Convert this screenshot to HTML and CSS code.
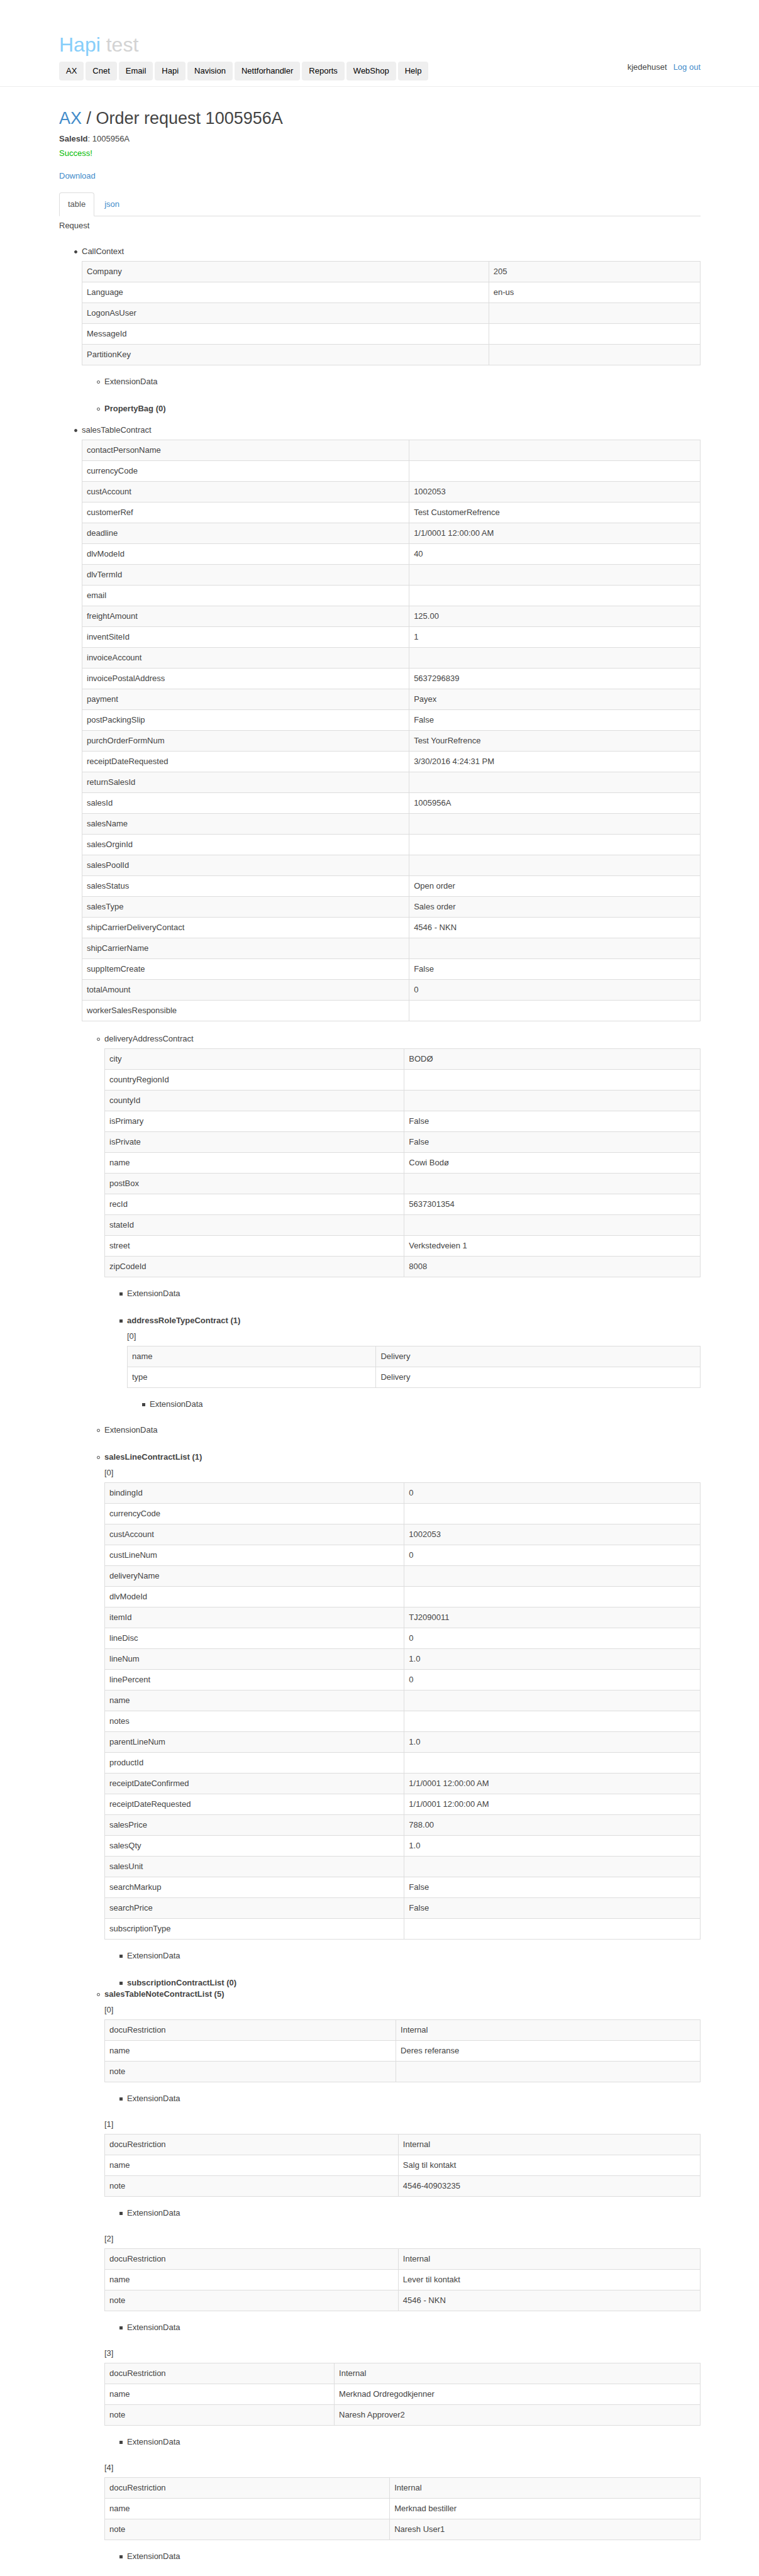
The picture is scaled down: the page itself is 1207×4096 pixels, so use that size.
FILE: index.html
```html
<!DOCTYPE html>
<html lang="en">
<head>
<meta charset="utf-8">
<meta name="viewport" content="width=device-width, initial-scale=1">
<title>Order request 1005956A</title>
<link rel="stylesheet" href="styles.css">
</head>
<body>
<header class="site-header">
  <div class="logo"><span class="logo-name">Hapi</span> test</div>
  <div class="header-row">
    <nav class="main-nav">
      <a href="#">AX</a>
      <a href="#">Cnet</a>
      <a href="#">Email</a>
      <a href="#">Hapi</a>
      <a href="#">Navision</a>
      <a href="#">Nettforhandler</a>
      <a href="#">Reports</a>
      <a href="#">WebShop</a>
      <a href="#">Help</a>
    </nav>
    <div class="user"><span>kjedehuset</span><a href="#">Log out</a></div>
  </div>
</header>
<main class="content">
  <h1><a href="#">AX</a> / Order request 1005956A</h1>
  <p class="sales-id"><b>SalesId</b>: 1005956A</p>
  <p class="success">Success!</p>
  <p class="download"><a href="#">Download</a></p>
  <nav class="tabs">
    <a class="tab active" href="#">table</a>
    <a class="tab" href="#">json</a>
  </nav>
  <p class="request">Request</p>
  <ul class="tree">
    <li class="branch">CallContext
      <table class="data data-context">
        <tr><td>Company</td><td>205</td></tr>
        <tr><td>Language</td><td>en-us</td></tr>
        <tr><td>LogonAsUser</td><td></td></tr>
        <tr><td>MessageId</td><td></td></tr>
        <tr><td>PartitionKey</td><td></td></tr>
      </table>
      <ul>
        <li class="leaf">ExtensionData</li>
        <li><b>PropertyBag (0)</b></li>
      </ul>
    </li>
    <li>salesTableContract
      <table class="data data-main">
        <tr><td>contactPersonName</td><td></td></tr>
        <tr><td>currencyCode</td><td></td></tr>
        <tr><td>custAccount</td><td>1002053</td></tr>
        <tr><td>customerRef</td><td>Test CustomerRefrence</td></tr>
        <tr><td>deadline</td><td>1/1/0001 12:00:00 AM</td></tr>
        <tr><td>dlvModeId</td><td>40</td></tr>
        <tr><td>dlvTermId</td><td></td></tr>
        <tr><td>email</td><td></td></tr>
        <tr><td>freightAmount</td><td>125.00</td></tr>
        <tr><td>inventSiteId</td><td>1</td></tr>
        <tr><td>invoiceAccount</td><td></td></tr>
        <tr><td>invoicePostalAddress</td><td>5637296839</td></tr>
        <tr><td>payment</td><td>Payex</td></tr>
        <tr><td>postPackingSlip</td><td>False</td></tr>
        <tr><td>purchOrderFormNum</td><td>Test YourRefrence</td></tr>
        <tr><td>receiptDateRequested</td><td>3/30/2016 4:24:31 PM</td></tr>
        <tr><td>returnSalesId</td><td></td></tr>
        <tr><td>salesId</td><td>1005956A</td></tr>
        <tr><td>salesName</td><td></td></tr>
        <tr><td>salesOrginId</td><td></td></tr>
        <tr><td>salesPoolId</td><td></td></tr>
        <tr><td>salesStatus</td><td>Open order</td></tr>
        <tr><td>salesType</td><td>Sales order</td></tr>
        <tr><td>shipCarrierDeliveryContact</td><td>4546 - NKN</td></tr>
        <tr><td>shipCarrierName</td><td></td></tr>
        <tr><td>suppItemCreate</td><td>False</td></tr>
        <tr><td>totalAmount</td><td>0</td></tr>
        <tr><td>workerSalesResponsible</td><td></td></tr>
      </table>
      <ul>
        <li>deliveryAddressContract
          <table class="data data-contract">
            <tr><td>city</td><td>BODØ</td></tr>
            <tr><td>countryRegionId</td><td></td></tr>
            <tr><td>countyId</td><td></td></tr>
            <tr><td>isPrimary</td><td>False</td></tr>
            <tr><td>isPrivate</td><td>False</td></tr>
            <tr><td>name</td><td>Cowi Bodø</td></tr>
            <tr><td>postBox</td><td></td></tr>
            <tr><td>recId</td><td>5637301354</td></tr>
            <tr><td>stateId</td><td></td></tr>
            <tr><td>street</td><td>Verkstedveien 1</td></tr>
            <tr><td>zipCodeId</td><td>8008</td></tr>
          </table>
          <ul>
            <li class="leaf">ExtensionData</li>
            <li><b>addressRoleTypeContract (1)</b>
              <p class="index">[0]</p>
              <table class="data">
                <tr><td>name</td><td>Delivery</td></tr>
                <tr><td>type</td><td>Delivery</td></tr>
              </table>
              <ul>
                <li class="leaf">ExtensionData</li>
              </ul>
            </li>
          </ul>
        </li>
        <li class="leaf">ExtensionData</li>
        <li><b>salesLineContractList (1)</b>
          <p class="index">[0]</p>
          <table class="data data-contract">
            <tr><td>bindingId</td><td>0</td></tr>
            <tr><td>currencyCode</td><td></td></tr>
            <tr><td>custAccount</td><td>1002053</td></tr>
            <tr><td>custLineNum</td><td>0</td></tr>
            <tr><td>deliveryName</td><td></td></tr>
            <tr><td>dlvModeId</td><td></td></tr>
            <tr><td>itemId</td><td>TJ2090011</td></tr>
            <tr><td>lineDisc</td><td>0</td></tr>
            <tr><td>lineNum</td><td>1.0</td></tr>
            <tr><td>linePercent</td><td>0</td></tr>
            <tr><td>name</td><td></td></tr>
            <tr><td>notes</td><td></td></tr>
            <tr><td>parentLineNum</td><td>1.0</td></tr>
            <tr><td>productId</td><td></td></tr>
            <tr><td>receiptDateConfirmed</td><td>1/1/0001 12:00:00 AM</td></tr>
            <tr><td>receiptDateRequested</td><td>1/1/0001 12:00:00 AM</td></tr>
            <tr><td>salesPrice</td><td>788.00</td></tr>
            <tr><td>salesQty</td><td>1.0</td></tr>
            <tr><td>salesUnit</td><td></td></tr>
            <tr><td>searchMarkup</td><td>False</td></tr>
            <tr><td>searchPrice</td><td>False</td></tr>
            <tr><td>subscriptionType</td><td></td></tr>
          </table>
          <ul>
            <li class="leaf">ExtensionData</li>
            <li><b>subscriptionContractList (0)</b></li>
          </ul>
        </li>
        <li><b>salesTableNoteContractList (5)</b>
          <p class="index">[0]</p>
          <table class="data data-note">
            <tr><td>docuRestriction</td><td>Internal</td></tr>
            <tr><td>name</td><td>Deres referanse</td></tr>
            <tr><td>note</td><td></td></tr>
          </table>
          <ul>
            <li class="leaf">ExtensionData</li>
          </ul>
          <p class="index">[1]</p>
          <table class="data data-contact">
            <tr><td>docuRestriction</td><td>Internal</td></tr>
            <tr><td>name</td><td>Salg til kontakt</td></tr>
            <tr><td>note</td><td>4546-40903235</td></tr>
          </table>
          <ul>
            <li class="leaf">ExtensionData</li>
          </ul>
          <p class="index">[2]</p>
          <table class="data data-contact">
            <tr><td>docuRestriction</td><td>Internal</td></tr>
            <tr><td>name</td><td>Lever til kontakt</td></tr>
            <tr><td>note</td><td>4546 - NKN</td></tr>
          </table>
          <ul>
            <li class="leaf">ExtensionData</li>
          </ul>
          <p class="index">[3]</p>
          <table class="data">
            <tr><td>docuRestriction</td><td>Internal</td></tr>
            <tr><td>name</td><td>Merknad Ordregodkjenner</td></tr>
            <tr><td>note</td><td>Naresh Approver2</td></tr>
          </table>
          <ul>
            <li class="leaf">ExtensionData</li>
          </ul>
          <p class="index">[4]</p>
          <table class="data">
            <tr><td>docuRestriction</td><td>Internal</td></tr>
            <tr><td>name</td><td>Merknad bestiller</td></tr>
            <tr><td>note</td><td>Naresh User1</td></tr>
          </table>
          <ul>
            <li class="leaf">ExtensionData</li>
          </ul>
        </li>
      </ul>
    </li>
  </ul>
</main>
</body>
</html>
```

FILE: styles.css
```css
*,
*::before {
  box-sizing: border-box;
}

body {
  margin: 0;
  background: #fff;
  color: #444;
  font: 13px/18px "Liberation Sans", Arial, sans-serif;
}

a {
  color: #428bca;
  text-decoration: none;
}

p {
  margin: 0;
}

/* Header */
.site-header {
  padding: 53px 93px 9px 94px;
  border-bottom: 1px solid #eee;
}

.logo {
  margin-bottom: 9px;
  color: #d3d3d3;
  font-size: 32px;
  line-height: 36px;
}

.logo-name {
  color: #87cefa;
}

.header-row {
  display: flex;
  justify-content: space-between;
  align-items: flex-start;
}

.main-nav {
  display: flex;
  gap: 3px;
}

.main-nav a {
  padding: 6px 11px;
  border-radius: 4px;
  background: #efefef;
  color: #000;
}

.user {
  display: flex;
  gap: 10px;
}

/* Page */
.content {
  padding: 35px 93px 0 94px;
}

h1 {
  margin: 0 0 9px;
  font-size: 27px;
  font-weight: 400;
  line-height: 30px;
}

.sales-id {
  margin-bottom: 5px;
}

.success {
  margin-bottom: 18px;
  color: #0b0;
}

.download {
  margin-bottom: 17px;
}

.tabs {
  display: flex;
  gap: 2px;
  border-bottom: 1px solid #ddd;
}

.tab {
  margin-bottom: -1px;
  padding: 9px 13px;
  border: 1px solid transparent;
  border-radius: 4px 4px 0 0;
}

.tab.active {
  border-color: #ddd #ddd #fff;
  background: #fff;
  color: #555;
}

.request {
  margin: 6px 0 23px;
}

/* Nested data */
ul {
  margin: 0;
  padding-left: 36px;
  list-style: none;
}

li {
  position: relative;
}

/* Bullets: disc, then ring, then square as the nesting deepens */
li::before {
  content: "";
  position: absolute;
  top: 7px;
  left: -12px;
  width: 5px;
  height: 5px;
  border: 1px solid #444;
  border-radius: 50%;
}

.tree > li::before {
  background: #444;
}

.tree ul ul > li::before {
  border-radius: 0;
  background: #444;
}

.branch {
  margin-bottom: 16px;
}

.leaf {
  margin-bottom: 25px;
}

.leaf:last-child {
  margin-bottom: 23px;
}

.index {
  margin-top: 7px;
}

.data {
  width: 100%;
  margin: 6px 0 17px;
  border-collapse: collapse;
}

.data-main {
  margin-bottom: 19px;
}

.data td {
  height: 33px;
  padding: 7px;
  border: 1px solid #ddd;
}

.data-context td:first-child {
  width: 65.8%;
}

.data-contract td:first-child {
  width: 50.3%;
}

.data-note td:first-child {
  width: 48.9%;
}

.data-contact td:first-child {
  width: 49.3%;
}

.data tr:nth-child(odd) {
  background: #f9f9f9;
}
```
